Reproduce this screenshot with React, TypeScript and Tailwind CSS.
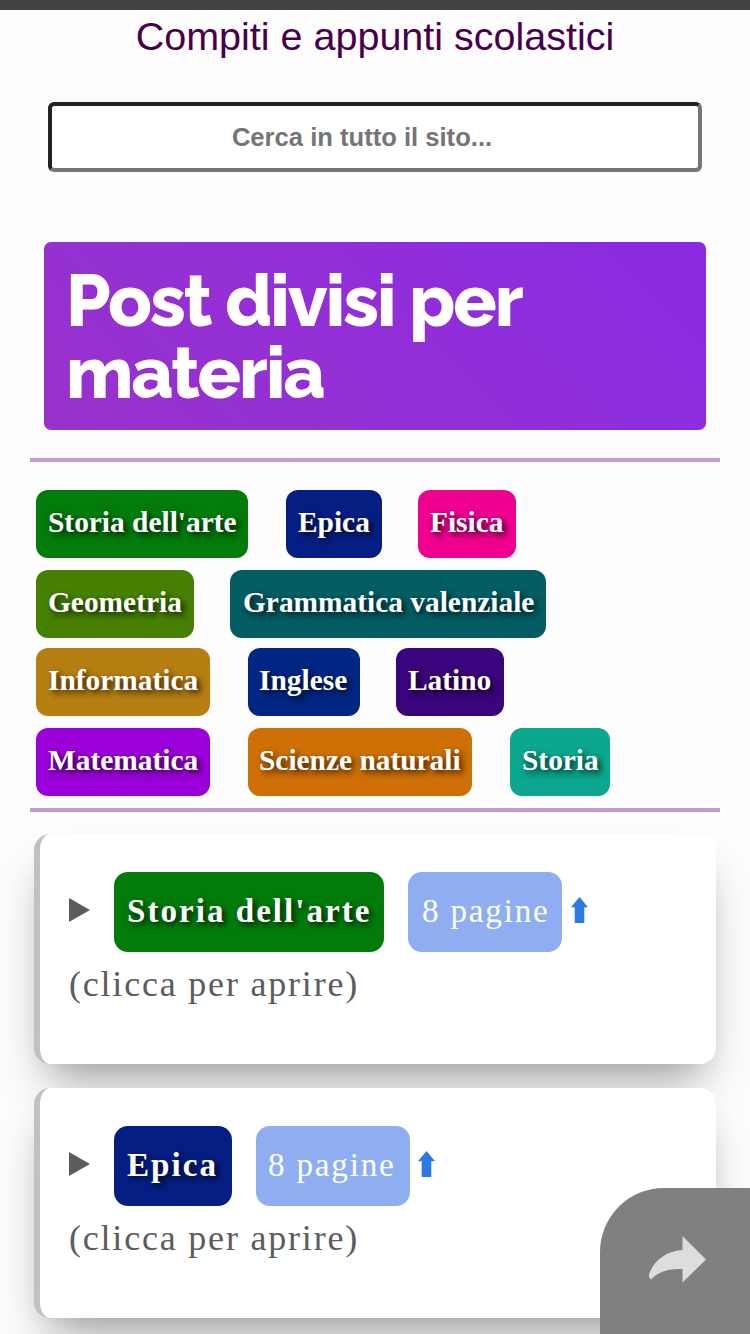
type Tag = { label: string; className: string };

const tagRows: { className: string; tags: Tag[] }[] = [
  {
    className: 'mt-7',
    tags: [
      { label: "Storia dell'arte", className: 'w-[212px] bg-[#037b0b] pl-3' },
      { label: 'Epica', className: 'ml-[38px] w-24 bg-[#051e83] pl-3' },
      { label: 'Fisica', className: 'ml-9 w-[98px] bg-[#f0008f] pl-3' },
    ],
  },
  {
    className: 'mt-3',
    tags: [
      { label: 'Geometria', className: 'w-[158px] bg-[#458003] pl-3' },
      { label: 'Grammatica valenziale', className: 'ml-9 w-[316px] bg-[#035d63] pl-[13px]' },
    ],
  },
  {
    className: 'mt-2.5',
    tags: [
      { label: 'Informatica', className: 'w-[174px] bg-[#b77f12] pl-3' },
      { label: 'Inglese', className: 'ml-[38px] w-28 bg-[#002684] pl-[11px]' },
      { label: 'Latino', className: 'ml-9 w-[108px] bg-[#3a047c] pl-3' },
    ],
  },
  {
    className: 'mt-3',
    tags: [
      { label: 'Matematica', className: 'w-[174px] bg-[#9b00da] pl-3' },
      { label: 'Scienze naturali', className: 'ml-[38px] w-56 bg-[#cf7006] pl-[11px]' },
      { label: 'Storia', className: 'ml-[38px] w-[100px] bg-[#0ba78e] pl-3' },
    ],
  },
];

type Section = Tag & { pagesClassName: string; arrowClassName: string };

const sections: Section[] = [
  {
    label: "Storia dell'arte",
    className: 'w-[270px] bg-[#037b0b]',
    pagesClassName: 'pl-3.5',
    arrowClassName: 'ml-[9px]',
  },
  {
    label: 'Epica',
    className: 'w-[118px] bg-[#051e83]',
    pagesClassName: 'pl-3',
    arrowClassName: 'ml-2',
  },
];

function SubjectCard({ label, className, pagesClassName, arrowClassName }: Section) {
  return (
    <section className="h-[230px] rounded-2xl border-l-[6px] border-[#c1c1c1] bg-white pt-[38px] pl-[29px] text-[36px] tracking-[1.8px] text-[#5c5c5c] shadow-[0_32px_50px_-12px_rgba(0,0,0,0.25),0_18px_36px_-18px_rgba(0,0,0,0.23)]">
      <div className="flex h-20 items-center">
        <svg className="mt-[-4px] h-6 w-[21px]" viewBox="0 0 21 24" fill="#5c5c5c">
          <path d="M0 0L21 12L0 24Z" />
        </svg>
        <span
          className={`ml-6 h-20 rounded-[14px] pl-[13px] text-[33.12px] leading-[78px] font-bold tracking-[2px] whitespace-nowrap text-white [text-shadow:3px_3px_6px_rgba(0,0,0,0.8)] ${className}`}
        >
          {label}
        </span>
        <span
          className={`ml-6 h-20 w-[154px] rounded-[14px] bg-[#8faef2] text-[33.12px] leading-[78px] whitespace-nowrap text-white ${pagesClassName}`}
        >
          8 pagine
        </span>
        <svg className={`mt-[-4px] h-[26px] w-[17px] ${arrowClassName}`} viewBox="0 0 17 26" fill="#2a7ae2">
          <path d="M8.5 0L17 10.300H13.300V26H3.700V10.300H0Z" />
        </svg>
      </div>
      <p className="mt-[11px] leading-[42px]">(clicca per aprire)</p>
    </section>
  );
}

export default function App() {
  return (
    <div className="relative h-[1334px] w-[750px] overflow-hidden bg-[#fdfdfd] font-['Liberation_Serif',serif]">
      <div className="h-2.5 bg-[#424242]" />
      <h1 className="mt-1 h-[46px] text-center font-['Liberation_Sans',sans-serif] text-[39.5px] leading-[45px] text-[#49004c]">
        Compiti e appunti scolastici
      </h1>
      <input
        type="text"
        placeholder="Cerca in tutto il sito..."
        className="mt-[42px] ml-12 block h-[70px] w-[654px] rounded-[6px] border-4 border-t-[#212121] border-r-[#767676] border-b-[#767676] border-l-[#212121] bg-white pr-[26px] text-center font-['Liberation_Sans',sans-serif] text-[25.6px] font-bold placeholder:text-[#757575]"
      />
      <h2 className="mx-11 mt-[70px] h-[188px] rounded-[7px] bg-[linear-gradient(45deg,#9932cc,#8a2be2)] pt-[23px] pl-[22px] font-['Raleway','Lato',sans-serif] text-[72px] leading-[72px] font-extrabold tracking-[-2px] text-white">
        Post divisi per
        <br />
        materia
      </h2>
      <div className="mx-[30px] mt-7 h-1 bg-[#cc99cc]" />
      <nav className="ml-9">
        {tagRows.map((row) => (
          <div key={row.tags[0].label} className={`flex ${row.className}`}>
            {row.tags.map((tag) => (
              <span
                key={tag.label}
                className={`h-[68px] rounded-xl text-[29.4px] leading-[64px] font-bold whitespace-nowrap text-white [text-shadow:3px_3px_6px_rgba(0,0,0,0.8)] ${tag.className}`}
              >
                {tag.label}
              </span>
            ))}
          </div>
        ))}
      </nav>
      <div className="mx-[30px] mt-3 h-1 bg-[#cc99cc]" />
      <main className="mx-[34px] mt-[22px] flex flex-col gap-6">
        {sections.map((section) => (
          <SubjectCard key={section.label} {...section} />
        ))}
      </main>
      <button
        aria-label="Condividi"
        className="absolute right-0 bottom-0 h-[146px] w-[150px] rounded-tl-[64px] bg-[#808080]"
      >
        <svg className="absolute top-12 left-12 h-12 w-[60px]" viewBox="0 0 60 48" fill="#dddddd">
          <path d="M58 23.5L34.5 0V14C17 15 4.500 26 .7 39.500Q1 41.500 3 43.500C11 35.500 19 32.500 34.500 33V46.500Z" />
        </svg>
      </button>
    </div>
  );
}
